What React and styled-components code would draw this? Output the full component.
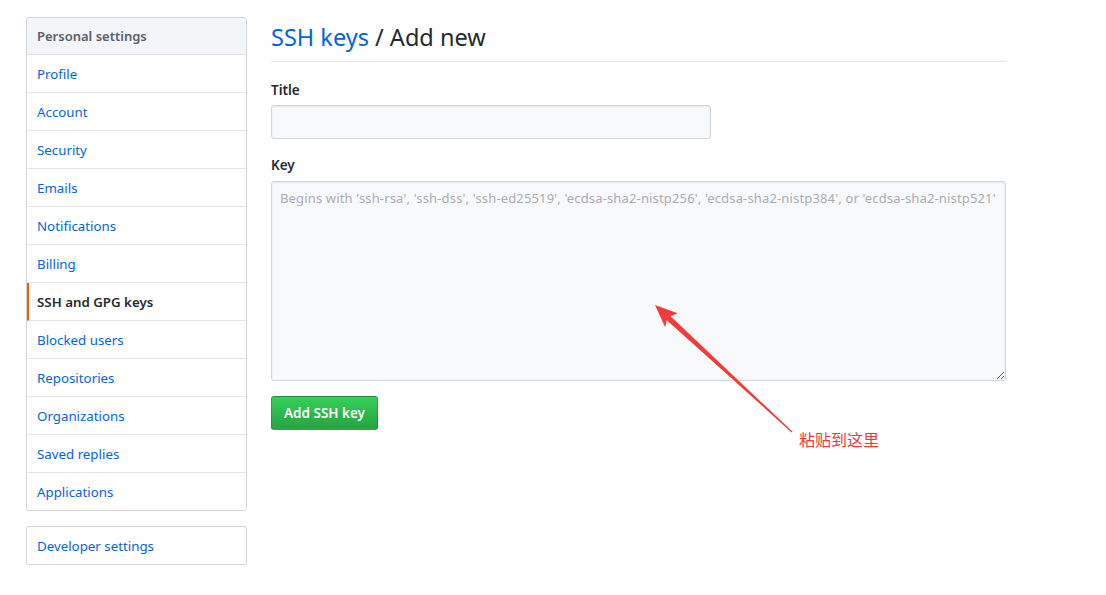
import React from "react";
import styled, { createGlobalStyle } from "styled-components";

const Global = createGlobalStyle`
  html, body { margin: 0; padding: 0; background: #fff; }
  body {
    font-family: "Noto Sans", "Open Sans", "Liberation Sans", "Noto Sans CJK SC", sans-serif;
    font-size: 14px;
    color: #24292e;
  }
  * { box-sizing: border-box; }
`;

const Page = styled.div`
  position: relative;
  width: 1106px;
  height: 595px;
  padding: 17px 0 0 26px;
  display: flex;
  gap: 24px;
  align-items: flex-start;
`;

const Sidebar = styled.div`
  width: 221px;
  display: flex;
  flex-direction: column;
  gap: 15px;
`;

const Menu = styled.nav`
  border: 1px solid #d1d5da;
  border-radius: 3px;
  overflow: hidden;
  background: #fff;
`;

const MenuHeading = styled.div`
  height: 37px;
  padding: 0 10px;
  display: flex;
  align-items: center;
  background: #f3f5f8;
  border-bottom: 1px solid #e1e4e8;
  color: #586069;
  font-size: 13px;
  font-weight: 600;
`;

const MenuItem = styled.a`
  height: 38px;
  display: flex;
  align-items: center;
  padding: 0 10px 0 8px;
  border-bottom: 1px solid #e1e4e8;
  color: ${(p) => (p.$selected ? "#24292e" : "#0366d6")};
  font-weight: ${(p) => (p.$selected ? 600 : 400)};
  text-decoration: none;
  border-left: 2px solid ${(p) => (p.$selected ? "#e36209" : "transparent")};
  font-size: 13.3px;
  &:last-child { border-bottom: none; height: 37px; }
`;

const Main = styled.main`
  width: 735px;
  display: flex;
  flex-direction: column;
`;

const Heading = styled.h2`
  margin: 0;
  padding: 5px 0 9px;
  font-size: 23.5px;
  font-weight: 400;
  line-height: 30px;
  border-bottom: 1px solid #e1e4e8;
  color: #24292e;
`;

const Crumb = styled.a`
  color: #0366d6;
  text-decoration: none;
`;

const Form = styled.form`
  display: flex;
  flex-direction: column;
  padding-top: 18px;
`;

const Label = styled.label`
  font-weight: 600;
  font-size: 13.5px;
  line-height: 20px;
  margin-bottom: ${(p) => p.$mb}px;
  color: #24292e;
`;

const Group = styled.div`
  display: flex;
  flex-direction: column;
  margin-bottom: ${(p) => p.$mb}px;
`;

const Input = styled.input`
  width: 440px;
  height: 34px;
  border: 1px solid #d1d5da;
  border-radius: 3px;
  background: #f8f9fb;
  box-shadow: inset 0 1px 2px rgba(27,31,35,0.075);
  font: inherit;
  padding: 6px 8px;
`;

const TextArea = styled.textarea`
  width: 735px;
  height: 200px;
  border: 1px solid #d1d5da;
  border-radius: 3px;
  background: #f8f9fb;
  box-shadow: inset 0 1px 2px rgba(27,31,35,0.075);
  font-family: inherit;
  font-size: 13px;
  letter-spacing: 0.15px;
  padding: 7px 4px 7px 8px;
  resize: vertical;
  &::placeholder { color: #a8adb3; }
`;

const Button = styled.button`
  align-self: flex-start;
  height: 34px;
  padding: 0 12px;
  border: 1px solid rgba(27,31,35,0.2);
  border-radius: 3px;
  background-image: linear-gradient(-180deg, #34d058 0%, #28a745 90%);
  color: #fff;
  font-family: inherit;
  font-size: 13.5px;
  font-weight: 600;
`;

const Overlay = styled.svg`
  position: absolute;
  left: 0;
  top: 0;
  width: 1106px;
  height: 595px;
  pointer-events: none;
`;

const Note = styled.span`
  position: absolute;
  left: 799px;
  top: 427px;
  color: #f0393a;
  font-family: "Noto Sans CJK SC", sans-serif;
  font-size: 16px;
`;

const items = [
  "Profile", "Account", "Security", "Emails", "Notifications", "Billing",
  "SSH and GPG keys", "Blocked users", "Repositories", "Organizations",
  "Saved replies", "Applications",
];

export default function App() {
  return (
    <>
      <Global />
      <Page>
        <Sidebar>
          <Menu>
            <MenuHeading>Personal settings</MenuHeading>
            {items.map((it) => (
              <MenuItem key={it} $selected={it === "SSH and GPG keys"}>{it}</MenuItem>
            ))}
          </Menu>
          <Menu>
            <MenuItem>Developer settings</MenuItem>
          </Menu>
        </Sidebar>
        <Main>
          <Heading>
            <Crumb>SSH keys</Crumb> / Add new
          </Heading>
          <Form onSubmit={(e) => e.preventDefault()}>
            <Group $mb={16}>
              <Label $mb={5}>Title</Label>
              <Input />
            </Group>
            <Group $mb={15}>
              <Label $mb={6}>Key</Label>
              <TextArea placeholder="Begins with 'ssh-rsa', 'ssh-dss', 'ssh-ed25519', 'ecdsa-sha2-nistp256', 'ecdsa-sha2-nistp384', or 'ecdsa-sha2-nistp521'" />
            </Group>
            <Button type="submit">Add SSH key</Button>
          </Form>
        </Main>
        <Overlay viewBox="0 0 1106 595">
          <polygon
            fill="#f23a3a"
            points="655,305 677.5,313.2 670.6,316.2 792.4,431.6 791.6,432.4 666.8,320.2 665.2,327.2"
          />
        </Overlay>
        <Note>粘贴到这里</Note>
      </Page>
    </>
  );
}
